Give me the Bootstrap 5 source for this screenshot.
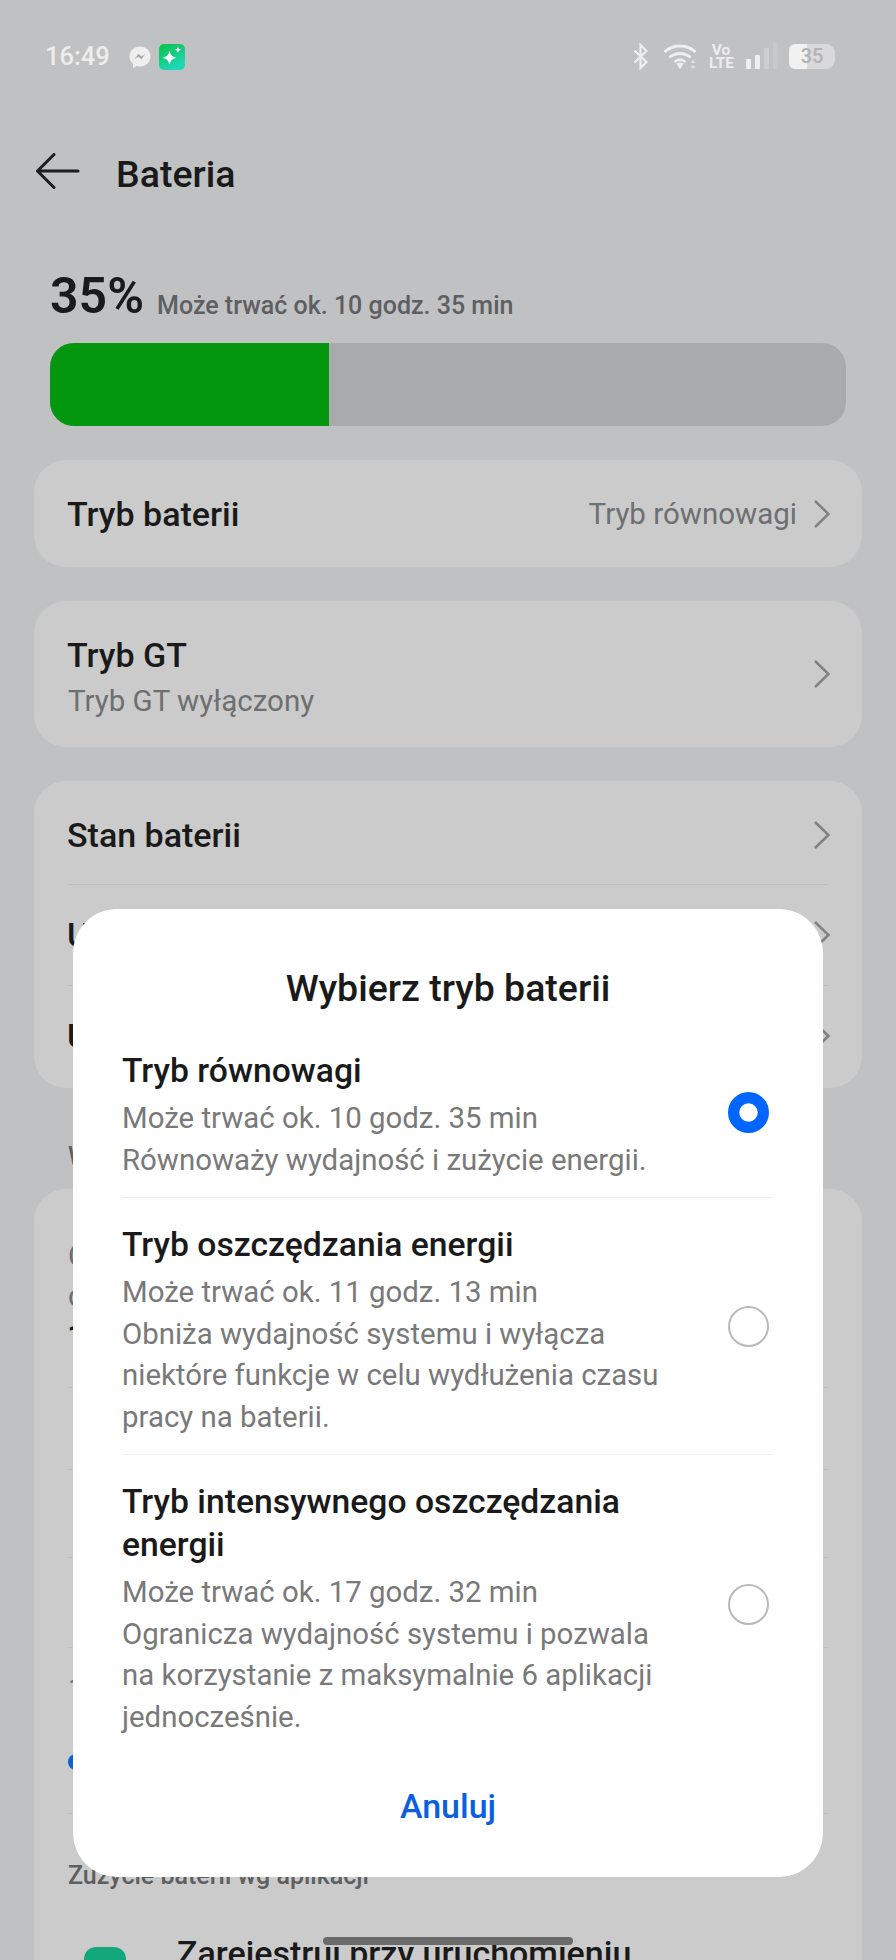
<!DOCTYPE html>
<html lang="pl">
<head>
    <meta charset="UTF-8">
    <meta name="viewport" content="width=device-width, initial-scale=1.0">
    <title>Bateria</title>
    <link href="https://cdn.jsdelivr.net/npm/bootstrap@5.3.0/dist/css/bootstrap.min.css" rel="stylesheet">
    <script src="https://cdn.jsdelivr.net/npm/bootstrap@5.3.0/dist/js/bootstrap.bundle.min.js"></script>
    <style>
        html, body { height: 1960px; overflow: hidden; }
        body {
            background: #c0c1c3;
            color: #1a1a1a;
            font-family: Roboto, "Liberation Sans", sans-serif;
            position: relative;
        }
        /* status bar */
        .status-row { height: 27px; margin: 43px 61px 0 45px; color: #ededed; }
        .status-time { font-size: 25.5px; font-weight: 500; line-height: 27px; width: 84px; }
        .volte { font-size: 15.5px; font-weight: 700; line-height: 12.5px; width: 24px; text-align: center; margin: 0 13px 0 11px; white-space: nowrap; }
        .batt-icon {
            width: 46px; height: 25px; margin-left: 10px;
            background: linear-gradient(90deg, #f1f1f1 40%, #d9d9d9 40%);
            border-radius: 6px 9px 9px 6px;
            color: #b2b3b4; font-size: 20px; font-weight: 500; line-height: 25px; text-align: center;
        }
        /* header */
        .top-head { height: 42px; margin: 80px 0 0 36px; }
        .top-title { font-size: 37.5px; font-weight: 500; line-height: 42px; margin-left: 36px; padding-top: 5px; }
        /* summary */
        .summary-line { margin: 74px 50px 0; height: 60px; }
        .summary-pct { font-size: 50px; font-weight: 600; line-height: 60px; }
        .summary-note { font-size: 25px; font-weight: 500; color: #5e5f61; margin: 0 0 3px 13px; line-height: 34px; }
        .batt-bar { height: 83px; margin: 17px 50px 0; border-radius: 24px; background: #a9aaac; }
        .batt-bar .progress-bar { background: #03960f; }
        /* setting cards */
        .set-card { background: #cbcbcb; border: 0; border-radius: 32px; margin: 0 34px; padding: 0 34px; color: #1a1a1a; }
        .set-row { border-bottom: 1.5px solid #bebebe; }
        .set-row:last-child { border-bottom: 0; }
        .set-name { font-size: 34px; font-weight: 500; line-height: 40px; margin-left: -1px; }
        .set-value { font-size: 29.5px; color: #6e6f70; line-height: 40px; }
        .gt-sub { margin-top: 6px; }
        .chev { width: 18px; height: 30px; flex: none; margin-right: -3px; }
        .sec-label { font-size: 25px; color: #5e5f61; font-weight: 500; margin: 0 68px; line-height: 34px; }
        .app-name { font-size: 34px; font-weight: 500; line-height: 40px; margin-left: 51px; white-space: nowrap; }
        /* overlay dialog */
        .mode-dialog {
            position: absolute; left: 73px; top: 909px; width: 750px; height: 968px;
            background: #fff; border: 0; border-radius: 44px; padding: 0 49px;
        }
        .mode-title { font-size: 37.5px; font-weight: 500; line-height: 48px; text-align: center; margin: 55px 0 12px; }
        .mode-item { border-bottom: 1.5px solid #eeeeee; margin-right: 1px; }
        .mode-item:last-of-type { border-bottom: 0; }
        .mode-text { width: 560px; padding: 25px 0 16px; }
        .mode-name { font-size: 33.7px; font-weight: 500; line-height: 43px; margin-bottom: 6px; }
        .mode-desc { font-size: 29.4px; color: #79797a; line-height: 41.5px; }
        .form-check-input.mode-radio {
            width: 41px; height: 41px; margin: 0 4px 0 0; flex: none;
            border: 2px solid #b9b9b9; background-color: #fff;
        }
        .form-check-input.mode-radio:checked { background-color: #0066ff; border-color: #0066ff; margin-top: 4px; }
        .cancel-btn { display: block; margin: 30px auto 0; padding: 0; border: 0; background: none; font-size: 34px; font-weight: 500; line-height: 44px; color: #0b5fe0; }
        .home-bar { position: absolute; left: 323px; top: 1937px; width: 250px; height: 8px; border-radius: 4px; background: #6b6b6b; }
    </style>
</head>
<body>
    <div class="status-row d-flex align-items-center">
        <div class="status-time">16:49</div>
        <svg width="22" height="22" viewBox="0 0 22 22"><path d="M11 .5C5 .5.5 4.9.5 10.4c0 3 1.300 5.500 3.500 7.300V22l3.700-2c1 .3 2.200.4 3.300.4 6 0 10.500-4.400 10.500-10S17 .500 11 .500z" fill="#eeeeee"/><path d="M5.500 13.200l4-5.400 3 2.600 3.800-2.500-3.900 5.300-3-2.500z" fill="#a6a7a9"/></svg>
        <svg width="26" height="26" viewBox="0 0 26 26" class="ms-2"><defs><linearGradient id="appg" x1="0" y1="0" x2="0.5" y2="1"><stop offset="0" stop-color="#0ac144"/><stop offset="1" stop-color="#1fd8b8"/></linearGradient></defs><rect width="26" height="26" rx="5" fill="url(#appg)"/><path d="M10.500 6.500c1 4.600 2.500 6.200 7 7.200-4.500 1-6 2.600-7 7.100-1-4.500-2.500-6.100-7-7.100 4.500-1 6-2.600 7-7.200z" fill="#fff"/><path d="M19 2.500c.4 2 1.100 2.700 3.100 3.200-2 .5-2.700 1.200-3.100 3.200-.4-2-1.100-2.700-3.100-3.200 2-.5 2.700-1.200 3.100-3.200z" fill="#fff"/></svg>
        <div class="flex-grow-1"></div>
        <svg width="16" height="27" viewBox="0 0 16 27"><path d="M1.500 7.500l12 11.500-6 6V2l6 6-12 11.500" fill="none" stroke="#eeeeee" stroke-width="2.200"/></svg>
        <svg width="34" height="27" viewBox="1 0 34 27" style="margin-left: 15px;"><path d="M1.500 9C10 1 24 1 32.500 9" fill="none" stroke="#eeeeee" stroke-width="3"/><path d="M6.500 14.500c6-5.500 15-5.500 21 0" fill="none" stroke="#eeeeee" stroke-width="3"/><path d="M11.500 19c3.500-3 7.500-3 11 0" fill="none" stroke="#eeeeee" stroke-width="2.600"/><path d="M13.500 20.500c2-1.500 5-1.500 7 0L17 26.500z" fill="#eeeeee"/><path d="M30 16.500l2.500 3.200h-5zM30 26l2.500-3.200h-5z" fill="#e2e2e2"/></svg>
        <div class="volte">Vo<br>LTE</div>
        <svg width="33" height="27" viewBox="0 0 33 27"><rect x="0" y="16" width="5" height="10" rx="1" fill="#eeeeee"/><rect x="9" y="12" width="5" height="14" rx="1" fill="#eeeeee"/><rect x="18" y="5" width="5" height="21" rx="1" fill="#cdcecf"/><rect x="27" y="0" width="5" height="26" rx="1" fill="#c7c8c9"/></svg>
        <div class="batt-icon">35</div>
    </div>

    <div class="top-head d-flex align-items-center">
        <svg width="44" height="36" viewBox="0 0 44 36"><path d="M42 18H2M18 1.500L1.500 18 18 34.500" fill="none" stroke="#1d1d1d" stroke-width="3" stroke-linecap="round" stroke-linejoin="round"/></svg>
        <div class="top-title">Bateria</div>
    </div>

    <div class="summary-line d-flex align-items-end">
        <span class="summary-pct">35%</span>
        <span class="summary-note">Może trwać ok. 10 godz. 35 min</span>
    </div>
    <div class="progress batt-bar">
        <div class="progress-bar" style="width: 35%"></div>
    </div>

    <div class="card set-card" style="margin-top: 34px; height: 107px;">
        <div class="d-flex align-items-center justify-content-between h-100">
            <div class="set-name">Tryb baterii</div>
            <div class="d-flex align-items-center gap-3">
                <span class="set-value">Tryb równowagi</span>
                <svg class="chev" viewBox="0 0 18 30"><path d="M2 2l13.500 13L2 28" fill="none" stroke="#808182" stroke-width="2.500"/></svg>
            </div>
        </div>
    </div>

    <div class="card set-card" style="margin-top: 34px; height: 146px;">
        <div class="d-flex align-items-center justify-content-between h-100">
            <div class="pt-2">
                <div class="set-name">Tryb GT</div>
                <div class="set-value gt-sub">Tryb GT wyłączony</div>
            </div>
            <svg class="chev" viewBox="0 0 18 30"><path d="M2 2l13.500 13L2 28" fill="none" stroke="#808182" stroke-width="2.500"/></svg>
        </div>
    </div>

    <div class="card set-card" style="margin-top: 34px; height: 307px;">
        <div class="set-row d-flex align-items-center justify-content-between pt-1" style="height: 104px;">
            <div class="set-name">Stan baterii</div>
            <svg class="chev" viewBox="0 0 18 30"><path d="M2 2l13.500 13L2 28" fill="none" stroke="#808182" stroke-width="2.500"/></svg>
        </div>
        <div class="set-row d-flex align-items-center justify-content-between" style="height: 101px;">
            <div class="set-name">U</div>
            <svg class="chev" viewBox="0 0 18 30"><path d="M2 2l13.500 13L2 28" fill="none" stroke="#808182" stroke-width="2.500"/></svg>
        </div>
        <div class="set-row d-flex align-items-center justify-content-between" style="height: 100px;">
            <div class="set-name">U</div>
            <svg class="chev" viewBox="0 0 18 30"><path d="M2 2l13.500 13L2 28" fill="none" stroke="#808182" stroke-width="2.500"/></svg>
        </div>
    </div>

    <div class="sec-label" style="margin-top: 52px;">W</div>

    <div class="card set-card" style="margin-top: 15px; border-radius: 32px 32px 0 0; height: 800px;">
        <div class="set-row" style="height: 201px; padding-top: 47px;">
            <div class="set-value">C</div>
            <div class="set-value">c</div>
            <div class="set-name">1</div>
        </div>
        <div class="set-row" style="height: 83px;"></div>
        <div class="set-row" style="height: 90px;"></div>
        <div class="set-row" style="height: 91px;"></div>
        <div class="set-row" style="height: 168px; padding-top: 21px;">
            <div class="set-value">1</div>
            <div class="rounded-circle" style="width: 16px; height: 16px; background: #0b63ce; margin-top: 45px;"></div>
        </div>
        <div style="padding-top: 45px;">
            <div class="sec-label m-0">Zużycie baterii wg aplikacji</div>
            <div class="d-flex" style="margin-top: 40px;">
                <div style="width: 42px; height: 42px; margin: 14px 0 0 16px; border-radius: 12px; background: #14a77b; flex: none;"></div>
                <div class="app-name">Zarejestruj przy uruchomieniu</div>
            </div>
        </div>
    </div>

    <div class="card mode-dialog">
        <h5 class="mode-title">Wybierz tryb baterii</h5>
        <div class="mode-item d-flex align-items-center justify-content-between">
            <div class="mode-text">
                <div class="mode-name">Tryb równowagi</div>
                <div class="mode-desc">Może trwać ok. 10 godz. 35 min<br>Równoważy wydajność i zużycie energii.</div>
            </div>
            <input class="form-check-input mode-radio" type="radio" name="mode" checked>
        </div>
        <div class="mode-item d-flex align-items-center justify-content-between">
            <div class="mode-text">
                <div class="mode-name">Tryb oszczędzania energii</div>
                <div class="mode-desc">Może trwać ok. 11 godz. 13 min<br>Obniża wydajność systemu i wyłącza<br>niektóre funkcje w celu wydłużenia czasu<br>pracy na baterii.</div>
            </div>
            <input class="form-check-input mode-radio" type="radio" name="mode">
        </div>
        <div class="mode-item d-flex align-items-center justify-content-between">
            <div class="mode-text">
                <div class="mode-name">Tryb intensywnego oszczędzania<br>energii</div>
                <div class="mode-desc">Może trwać ok. 17 godz. 32 min<br>Ogranicza wydajność systemu i pozwala<br>na korzystanie z maksymalnie 6 aplikacji<br>jednocześnie.</div>
            </div>
            <input class="form-check-input mode-radio" type="radio" name="mode">
        </div>
        <button type="button" class="cancel-btn">Anuluj</button>
    </div>

    <div class="home-bar"></div>
</body>
</html>
